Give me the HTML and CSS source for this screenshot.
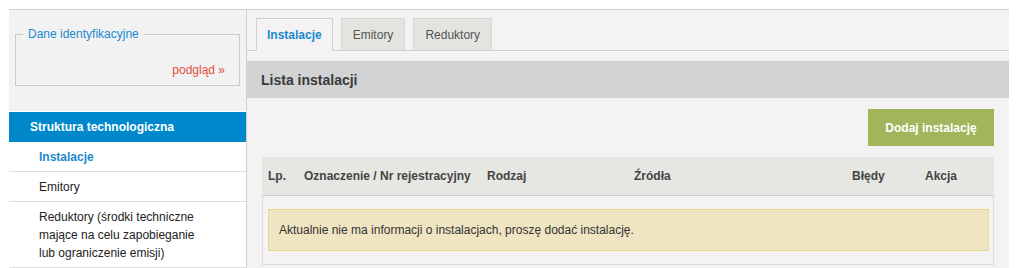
FILE: index.html
```html
<!DOCTYPE html>
<html lang="pl">
<head>
<meta charset="utf-8">
<link rel="stylesheet" href="styles.css">
</head>
<body>
<div class="page">
  <aside class="sidebar">
    <div class="ident">
      <fieldset class="ident-box">
        <legend class="ident-legend">Dane identyfikacyjne</legend>
        <div class="ident-link"><a href="#">podgląd »</a></div>
      </fieldset>
    </div>
    <div class="nav-title">Struktura technologiczna</div>
    <ul class="nav">
      <li class="nav-item active">Instalacje</li>
      <li class="nav-item">Emitory</li>
      <li class="nav-item">Reduktory (środki techniczne<br>mające na celu zapobieganie<br>lub ograniczenie emisji)</li>
    </ul>
  </aside>
  <main class="main">
    <div class="tabs">
      <div class="tab active">Instalacje</div>
      <div class="tab">Emitory</div>
      <div class="tab">Reduktory</div>
    </div>
    <div class="section-head">Lista instalacji</div>
    <div class="content">
      <div class="actions"><button class="btn-add">Dodaj instalację</button></div>
      <div class="table">
        <div class="thead">
          <div>Lp.</div>
          <div>Oznaczenie / Nr rejestracyjny</div>
          <div>Rodzaj</div>
          <div>Źródła</div>
          <div>Błędy</div>
          <div>Akcja</div>
        </div>
        <div class="tbody">
          <div class="alert">Aktualnie nie ma informacji o instalacjach, proszę dodać instalację.</div>
        </div>
      </div>
    </div>
  </main>
</div>
</body>
</html>
```
FILE: styles.css
```css
html, body {
  margin: 0;
  padding: 0;
  background: #ffffff;
  font-family: "Liberation Sans", Arial, sans-serif;
  font-size: 12px;
  color: #222;
}
.page {
  display: flex;
  margin: 9px 0 0 9px;
  width: 1000px;
  border-top: 1px solid #cfcfcf;
  height: 259px;
  overflow: hidden;
}
.sidebar {
  width: 237px;
  border-right: 1px solid #cfcfcf;
  background: #ffffff;
  flex: none;
}
.ident {
  background: #f2f2f2;
  padding: 17px 6px 25px 6px;
  border-bottom: 1px solid #ffffff;
}
.ident-box {
  margin: 0;
  border: 1px solid #cccccc;
  padding: 22px 14px 8px 14px;
}
.ident-legend {
  margin-left: -7px;
  padding: 0 5px;
  color: #1a8ad0;
  font-size: 12px;
  line-height: 14px;
}
.ident-link {
  text-align: right;
  line-height: 14px;
}
.ident-link a {
  color: #e0503f;
  text-decoration: none;
}
.nav-title {
  background: #0088cc;
  color: #ffffff;
  font-weight: bold;
  height: 30px;
  line-height: 30px;
  padding-left: 21px;
}
.nav {
  list-style: none;
  margin: 0;
  padding: 0;
}
.nav-item {
  padding: 6px 8px 5px 30px;
  line-height: 18px;
  border-bottom: 1px solid #dddddd;
  color: #222;
}
.nav-item.active {
  color: #1a8ad0;
  font-weight: bold;
}
.main {
  flex: 1;
  background: #f4f2f3;
  padding-top: 8px;
}
.tabs {
  display: flex;
  gap: 8px;
  padding-left: 9px;
  border-bottom: 1px solid #cfcfcf;
  height: 32px;
}
.tab {
  height: 31px;
  line-height: 32px;
  padding: 0 11px;
  background: #e3e3df;
  border: 1px solid #d6d6d2;
  border-bottom: none;
  color: #555;
}
.tab.active {
  background: #f4f2f3;
  border-color: #cfcfcf;
  color: #1a8ad0;
  font-weight: bold;
  height: 32px;
  padding: 0 10px;
}
.section-head {
  margin-top: 10px;
  background: #d1d3d4;
  height: 37px;
  line-height: 38px;
  padding-left: 14px;
  font-size: 14px;
  font-weight: bold;
  color: #3a3a3a;
}
.content {
  padding: 11px 15px 0 15px;
}
.actions {
  display: flex;
  justify-content: flex-end;
}
.btn-add {
  background: #a1b55a;
  color: #ffffff;
  border: none;
  height: 37px;
  width: 126px;
  font-family: "Liberation Sans", Arial, sans-serif;
  font-size: 12px;
  font-weight: bold;
  padding: 0;
}
.table {
  margin-top: 11px;
}
.thead {
  display: grid;
  grid-template-columns: 36px 183px 147px 218px 73px 1fr;
  padding-left: 6px;
  background: #e6e6e2;
  height: 38px;
  line-height: 38px;
  border-bottom: 1px solid #cccccc;
  font-weight: bold;
  color: #444;
}
.tbody {
  border: 1px solid #dddddd;
  border-top: none;
  padding: 13px 4px 13px 5px;
}
.alert {
  background: #efe5c2;
  border: 1px solid #e3da8c;
  height: 40px;
  line-height: 40px;
  padding-left: 10px;
  color: #333;
}
```
